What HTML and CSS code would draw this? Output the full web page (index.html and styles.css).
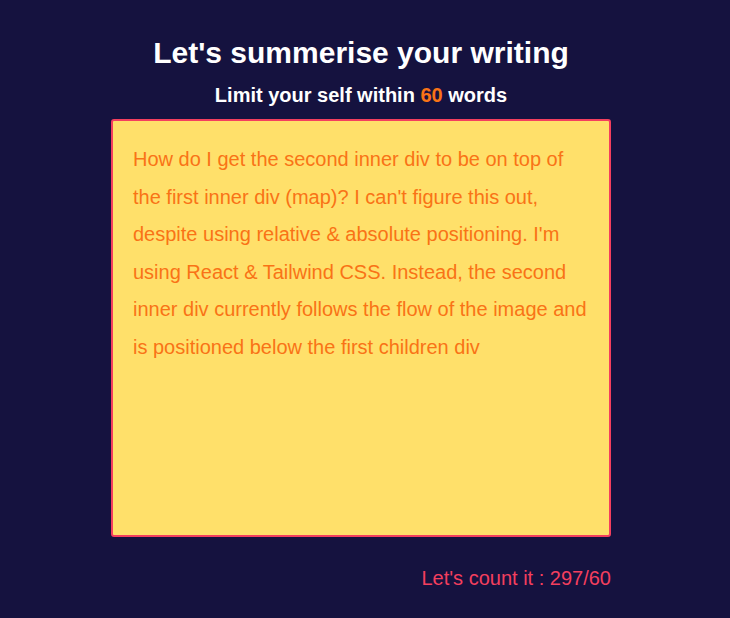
FILE: index.html
```html
<!DOCTYPE html>
<html>
<head>
<meta charset="utf-8">
<link rel="stylesheet" href="styles.css">
</head>
<body>
<main class="page">
  <h1 class="title">Let's summerise your writing</h1>
  <p class="subtitle">Limit your self within <span class="limit">60</span> words</p>
  <div class="editor">How do I get the second inner div to be on top of the first inner div (map)? I can't figure this out, despite using relative &amp; absolute positioning. I'm using React &amp; Tailwind CSS. Instead, the second inner div currently follows the flow of the image and is positioned below the first children div</div>
  <p class="count">Let's count it : 297/60</p>
</main>
</body>
</html>
```
FILE: styles.css
```css
html, body {
  margin: 0;
  padding: 0;
  background: #15123f;
  height: 100%;
}
body {
  font-family: "Liberation Sans", Arial, sans-serif;
  padding-right: 8px;
}
.page {
  width: 500px;
  margin: 0 auto;
  padding-top: 35px;
  display: flex;
  flex-direction: column;
}
.title {
  margin: 0;
  color: #ffffff;
  font-size: 30px;
  line-height: 36px;
  font-weight: 700;
  text-align: center;
}
.subtitle {
  margin: 10px 0 0;
  color: #ffffff;
  font-size: 20px;
  line-height: 28px;
  font-weight: 700;
  text-align: center;
}
.limit {
  color: #f97316;
}
.editor {
  margin-top: 10px;
  height: 418px;
  box-sizing: border-box;
  border: 2px solid #f43f5e;
  border-radius: 3px;
  background: #ffe06a;
  padding: 20px 20px;
  color: #f97316;
  font-size: 20px;
  line-height: 37.6px;
}
.count {
  margin: 27px 0 0;
  color: #f43f5e;
  font-size: 20px;
  line-height: 28px;
  text-align: right;
}
```
